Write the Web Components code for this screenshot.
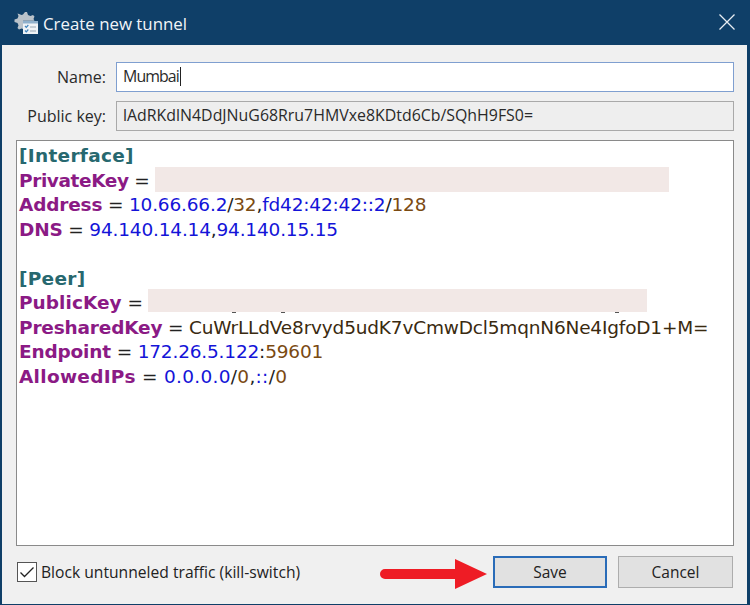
<!DOCTYPE html>
<html>
<head>
<meta charset="utf-8">
<title>Create new tunnel</title>
<style>
  html, body { margin: 0; height: 100%; }
  body { font-family: "Open Sans", "Noto Sans", sans-serif; overflow: hidden; }
</style>
</head>
<body>
<tunnel-dialog>
  <title-bar slot="title">Create new tunnel</title-bar>
  <key-field label="Name:" value="Mumbai" focused></key-field>
  <key-field label="Public key:" value="lAdRKdlN4DdJNuG68Rru7HMVxe8KDtd6Cb/SQhH9FS0=" readonly></key-field>
  <conf-editor></conf-editor>
  <kill-switch slot="footer">Block untunneled traffic (kill-switch)</kill-switch>
  <dialog-button slot="footer" default>Save</dialog-button>
  <dialog-button slot="footer">Cancel</dialog-button>
</tunnel-dialog>

<script>
// Outer window frame: title bar on top, form body, footer row
class TunnelDialog extends HTMLElement {
  constructor() {
    super();
    this.attachShadow({ mode: "open" });
    this.shadowRoot.innerHTML = `
      <style>
        :host { display: flex; flex-direction: column; position: relative; width: 750px; height: 605px;
                box-sizing: border-box; background: #f0f0f0; border: solid #0f3f68; border-width: 0 3px 1px 2px; }
        main { flex: 1; display: flex; flex-direction: column; gap: 9px; padding: 17px 13px 0 14px; min-height: 0; }
        footer { display: flex; align-items: center; gap: 11px; height: 58px; padding: 0 14px 6px 15px; box-sizing: border-box; }
        footer ::slotted(kill-switch) { margin-right: auto; }
        svg { position: absolute; left: 378px; top: 559px; }
      </style>
      <slot name="title"></slot>
      <main><slot></slot></main>
      <footer><slot name="footer"></slot></footer>
      <svg width="108" height="30" viewBox="0 0 108 30">
        <path d="M5 10H75V0L107 15L75 30V20H5a5 5 0 0 1 0-10z" fill="#ee1c25"/>
      </svg>`;
  }
}

class TitleBar extends HTMLElement {
  constructor() {
    super();
    this.attachShadow({ mode: "open" });
    this.shadowRoot.innerHTML = `
      <style>
        :host { display: flex; align-items: center; height: 45px; margin: 0 -3px 0 -2px; padding: 0 14px 2px 14px; box-sizing: border-box;
                background: #0f3f68; color: #f2f5f8; font-size: 16.850px; flex: none; }
        .title { margin: 3px 0 0 5px; flex: 1; }
      </style>
      <svg width="24" height="26" viewBox="0 0 24 26">
        <path d="M10 1l2 0 1 3 2.400 1 2.600-1 1.500 1.500-1 2.600 1 1.600H8v8.300l-1.400-.6-2.600 1-1.500-1.500 1-2.600-1-2.400-3-1v-2.400l3-1 1-2.400-1-2.600L4 3l2.600 1L8 3.500z" fill="#b9c2ca" transform="translate(1 2)"/>
        <rect x="9" y="12" width="15" height="13" fill="#eef2f6"/>
        <rect x="9" y="12" width="15" height="2.500" fill="#8fb0cc"/>
        <path d="M11 17l1.300 1.300 2-2.300M11 21.500l1.300 1.300 2-2.300" fill="none" stroke="#3f84bd" stroke-width="1.200"/>
        <path d="M16 18h6M16 22h6" stroke="#9aa8b4" stroke-width="1.200"/>
      </svg>
      <span class="title"><slot></slot></span>
      <svg width="18" height="18" viewBox="0 0 18 18">
        <path d="M1.500 1.500l15 15M16.500 1.500l-15 15" stroke="#e8edf2" stroke-width="1.300" fill="none"/>
      </svg>`;
  }
}

// One label + input row at the top of the form
class KeyField extends HTMLElement {
  constructor() {
    super();
    this.attachShadow({ mode: "open" });
  }

  connectedCallback() {
    const focused = this.hasAttribute("focused");
    const value = this.getAttribute("value");
    this.shadowRoot.innerHTML = `
      <style>
        :host { display: flex; align-items: center; gap: 10px; height: 30px; color: #2a2a2a; font-size: 16px; }
        label { width: 90px; text-align: right; flex: none; }
        .box { flex: 1; height: 100%; box-sizing: border-box; display: flex; align-items: center; padding: 0 6px 2px;
               border: 1px solid #a9a9a9; background: #eeeeee; font-size: 15.900px; white-space: nowrap; }
        :host([focused]) .box { background: #fff; border-color: #7f9fd0; letter-spacing: -.9px; }
        i { width: 1px; height: 19px; background: #222; margin-left: 1px; }
      </style>
      <label>${this.getAttribute("label")}</label>
      <div class="box"><span>${value}</span>${focused ? "<i></i>" : ""}</div>`;
  }
}

// Syntax coloured wg-quick config
class ConfEditor extends HTMLElement {
  constructor() {
    super();
    this.attachShadow({ mode: "open" });
    this.shadowRoot.innerHTML = `
      <style>
        :host { display: block; flex: 1; min-height: 0; box-sizing: border-box; background: #fff; border: 1px solid #8a8a8a;
                padding: 3px 2px; font: 18.500px/24.500px "DejaVu Sans", Verdana, sans-serif; color: #3a2a10; letter-spacing: -.18px; }
        div { height: 24.500px; white-space: nowrap; }
        .s { color: #27686f; font-weight: bold; letter-spacing: .3px; }
        .k { color: #8b1a85; font-weight: bold; }
        .e { color: #222; }
        .ip { color: #1414d8; }
        .n { color: #7a4a12; }
        .wide { letter-spacing: .3px; }
        .r { display: inline-block; vertical-align: top; height: 25px; margin-top: -2px; background: #f2e8e6; position: relative; }
        .r b { position: absolute; top: 100%; width: 4px; height: 1px; background: #555; }
      </style>
      <div><span class="s">[Interface]</span></div>
      <div><span class="k" style="letter-spacing:-.4px">PrivateKey</span> <span class="e">=</span> <span class="r" style="width:514px"></span></div>
      <div><span class="k">Address</span> <span class="e">=</span> <span class="ip">10.66.66.2</span><span class="e">/</span><span class="n">32</span><span class="e">,</span><span class="ip">fd42:42:42::2</span><span class="e">/</span><span class="n">128</span></div>
      <div><span class="k">DNS</span> <span class="e">=</span> <span class="ip">94.140.14.14</span><span class="e">,</span><span class="ip">94.140.15.15</span></div>
      <div></div>
      <div><span class="s">[Peer]</span></div>
      <div><span class="k" style="letter-spacing:.05px">PublicKey</span> <span class="e">=</span> <span class="r" style="width:499px;height:23px"><b style="left:84px"></b><b style="left:133px"></b><b style="left:467px"></b></span></div>
      <div><span class="k">PresharedKey</span> <span class="e">=</span> CuWrLLdVe8rvyd5udK7vCmwDcl5mqnN6Ne4IgfoD1+M=</div>
      <div><span class="k">Endpoint</span> <span class="e">=</span> <span class="ip">172.26.5.122</span><span class="e">:</span><span class="n">59601</span></div>
      <div class="wide"><span class="k">AllowedIPs</span> <span class="e">=</span> <span class="ip">0.0.0.0</span><span class="e">/</span><span class="n">0</span><span class="e">,</span><span class="ip">::</span><span class="e">/</span><span class="n">0</span></div>`;
  }
}

class KillSwitch extends HTMLElement {
  constructor() {
    super();
    this.attachShadow({ mode: "open" });
    this.shadowRoot.innerHTML = `
      <style>
        :host { display: flex; align-items: center; gap: 4px; color: #222; font-size: 15.650px; }
        svg { display: block; flex: none; }
        span { margin-top: -1px; }
      </style>
      <svg width="20" height="20" viewBox="0 0 20 20">
        <rect x=".5" y=".5" width="19" height="19" fill="#fff" stroke="#555"/>
        <path d="M3.500 10.500l4 4 9-9" fill="none" stroke="#222" stroke-width="1.300"/>
      </svg>
      <span><slot></slot></span>`;
  }
}

class DialogButton extends HTMLElement {
  constructor() {
    super();
    this.attachShadow({ mode: "open" });
    this.shadowRoot.innerHTML = `
      <style>
        :host { display: flex; align-items: center; justify-content: center; width: 115px; height: 32px; box-sizing: border-box;
                background: #e1e1e1; border: 1px solid #adadad; color: #222; font-size: 15.500px; }
        :host([default]) { border: 2px solid #2a6cb8; width: 114px; }
      </style>
      <slot></slot>`;
  }
}

customElements.define("tunnel-dialog", TunnelDialog);
customElements.define("title-bar", TitleBar);
customElements.define("key-field", KeyField);
customElements.define("conf-editor", ConfEditor);
customElements.define("kill-switch", KillSwitch);
customElements.define("dialog-button", DialogButton);
</script>
</body>
</html>
